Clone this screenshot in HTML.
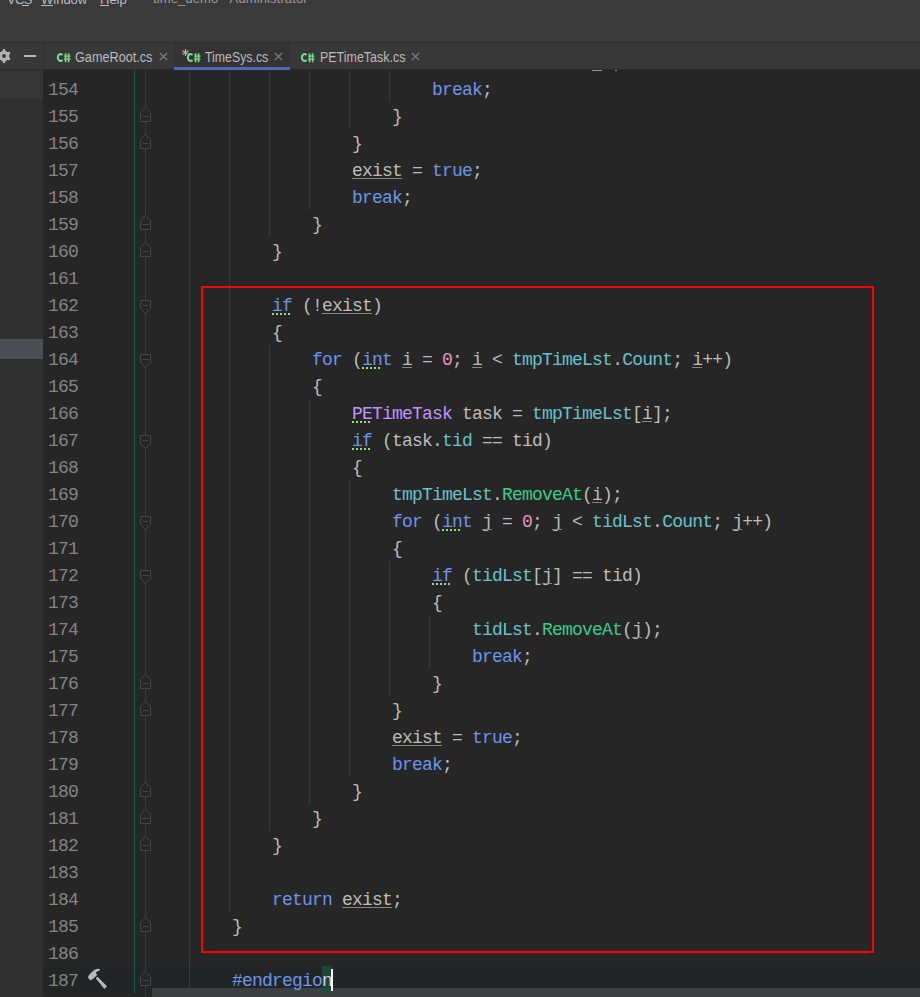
<!DOCTYPE html>
<html><head><meta charset="utf-8"><style>
*{margin:0;padding:0;box-sizing:border-box}
html,body{width:920px;height:997px;overflow:hidden;background:#262626}
body{position:relative;font-family:"Liberation Sans",sans-serif}
.a{position:absolute}
#menu{left:0;top:0;width:920px;height:42px;background:#3a3a3a}
#menu span{position:absolute;top:-8px;font-size:13px;color:#bbbbbb;white-space:nowrap}
#menu span.ti{color:#9d9d9d}
#tabs{left:0;top:42px;width:920px;height:28px;background:#383838;border-top:1px solid #2f2f2f;border-bottom:1px solid #2b2b2b}
#lp{left:0;top:70px;width:43px;height:927px;background:#2f2f2f}
#gut{left:43px;top:70px;width:877px;height:927px;background:#262626}
.tab{position:absolute;top:0;height:26px;font-size:14px;transform:scaleX(0.88);transform-origin:0 0;color:#bbbbbb;white-space:nowrap}
.cs{position:absolute;font-weight:bold;color:#62b543;font-size:12px;letter-spacing:-0.5px}
.x{position:absolute;color:#7f7f7f;font-size:14px}
.ln{position:absolute;left:48px;padding-top:2px;width:30px;height:27px;line-height:27px;text-align:left;font-family:"Liberation Mono",monospace;font-size:18px;letter-spacing:-0.8px;color:#858585;white-space:pre}
.cl{position:absolute;left:192px;padding-top:2px;height:27px;line-height:27px;font-family:"Liberation Mono",monospace;font-size:18px;letter-spacing:-0.8px;color:#bdbdbd;white-space:pre}
.k{color:#6c95eb}.n{color:#ed94c0}.f{color:#66c3cc}.m{color:#39cc8f}.c{color:#c191ff}.t{color:#bdbdbd}.p{color:#6c95eb}.pn{color:#c9d4e8}
.g{position:absolute;width:1px;background:#393939}
.ul{position:absolute;height:1px;background:#858585}
.dt{position:absolute;width:2px;height:2px;background:#8fe07a}
</style></head><body>

<div id="menu" class="a"><span style="left:7px;letter-spacing:-0.6px">VCS</span><div class="a" style="left:22px;top:5px;width:7px;height:1px;background:#bbb"></div><div class="a" style="left:41px;top:5px;width:12px;height:1px;background:#bbb"></div><div class="a" style="left:100px;top:5px;width:9px;height:1px;background:#bbb"></div><span style="left:41px">Window</span><span style="left:100px">Help</span><span class="ti" style="left:153px;top:-9px;letter-spacing:0.12px">time_demo <b style="font-weight:normal;color:transparent">-</b> Administrator</span></div>
<div id="tabs" class="a">
<div class="a" style="left:43px;top:0;width:1px;height:26px;background:#2f2f2f"></div>
<svg class="a" style="left:-4px;top:5px" width="16" height="16" viewBox="-8 -8 16 16"><g fill="#b2b2b6"><circle r="5.3"/><rect x="-1.35" y="-6.9" width="2.7" height="3.5" rx="0.7" transform="rotate(0)"/><rect x="-1.35" y="-6.9" width="2.7" height="3.5" rx="0.7" transform="rotate(60)"/><rect x="-1.35" y="-6.9" width="2.7" height="3.5" rx="0.7" transform="rotate(120)"/><rect x="-1.35" y="-6.9" width="2.7" height="3.5" rx="0.7" transform="rotate(180)"/><rect x="-1.35" y="-6.9" width="2.7" height="3.5" rx="0.7" transform="rotate(240)"/><rect x="-1.35" y="-6.9" width="2.7" height="3.5" rx="0.7" transform="rotate(300)"/></g><circle r="2" fill="#3a3a3a"/></svg>
<div class="a" style="left:24px;top:12px;width:12px;height:2px;background:#b8b8bc"></div>
<div class="a" style="left:174px;top:0;width:116px;height:26px;background:#333333"></div>
<div class="a" style="left:174px;top:24px;width:116px;height:3px;background:#4a6eb0"></div>
<svg class="a" style="left:56px;top:9px" width="16" height="12" viewBox="-1 -1 16 12"><g fill="none" stroke="#2c2c2c" stroke-width="3.2" opacity="0.6"><path d="M5.5 2.11A2.6 3.5 0 1 0 5.5 6.89"/><path d="M8.5 0V9.5M11.5 0V9.5M7 3H13.5M7 6.2H13.5"/></g><g fill="none" stroke="#7bd88a"><path stroke-width="2.1" d="M5.5 2.11A2.6 3.5 0 1 0 5.5 6.89"/><path stroke-width="1.7" d="M8.6 0.2V9.3M11.6 0.2V9.3"/><path stroke-width="1.3" d="M7 3.1H13.5M7 6.1H13.5"/></g></svg>
<span class="tab" style="left:75px;top:6px;transform:scaleX(0.905)">GameRoot.cs</span>
<svg class="a" style="left:159px;top:9px" width="9" height="9" viewBox="0 0 9 9"><path d="M0.8 0.8L8.2 8.2M8.2 0.8L0.8 8.2" stroke="#858585" stroke-width="1.1"/></svg>
<svg class="a" style="left:181px;top:5px" width="9" height="9" viewBox="-4.5 -4.5 9 9"><path d="M0 -3.6V3.6M-3.1 -1.8L3.1 1.8M-3.1 1.8L3.1 -1.8" stroke="#b4b4b4" stroke-width="1.2"/></svg>
<svg class="a" style="left:186px;top:9px" width="16" height="12" viewBox="-1 -1 16 12"><g fill="none" stroke="#2c2c2c" stroke-width="3.2" opacity="0.6"><path d="M5.5 2.11A2.6 3.5 0 1 0 5.5 6.89"/><path d="M8.5 0V9.5M11.5 0V9.5M7 3H13.5M7 6.2H13.5"/></g><g fill="none" stroke="#7bd88a"><path stroke-width="2.1" d="M5.5 2.11A2.6 3.5 0 1 0 5.5 6.89"/><path stroke-width="1.7" d="M8.6 0.2V9.3M11.6 0.2V9.3"/><path stroke-width="1.3" d="M7 3.1H13.5M7 6.1H13.5"/></g></svg>
<span class="tab" style="left:205px;top:6px">TimeSys.cs</span>
<svg class="a" style="left:274px;top:9px" width="9" height="9" viewBox="0 0 9 9"><path d="M0.8 0.8L8.2 8.2M8.2 0.8L0.8 8.2" stroke="#858585" stroke-width="1.1"/></svg>
<svg class="a" style="left:300px;top:9px" width="16" height="12" viewBox="-1 -1 16 12"><g fill="none" stroke="#2c2c2c" stroke-width="3.2" opacity="0.6"><path d="M5.5 2.11A2.6 3.5 0 1 0 5.5 6.89"/><path d="M8.5 0V9.5M11.5 0V9.5M7 3H13.5M7 6.2H13.5"/></g><g fill="none" stroke="#7bd88a"><path stroke-width="2.1" d="M5.5 2.11A2.6 3.5 0 1 0 5.5 6.89"/><path stroke-width="1.7" d="M8.6 0.2V9.3M11.6 0.2V9.3"/><path stroke-width="1.3" d="M7 3.1H13.5M7 6.1H13.5"/></g></svg>
<span class="tab" style="left:320px;top:6px;transform:scaleX(0.89)">PETimeTask.cs</span>
<svg class="a" style="left:411px;top:9px" width="9" height="9" viewBox="0 0 9 9"><path d="M0.8 0.8L8.2 8.2M8.2 0.8L0.8 8.2" stroke="#858585" stroke-width="1.1"/></svg>
</div>
<div id="lp" class="a"></div>
<div class="a" style="left:0;top:70px;width:43px;height:28px;background:#363636"></div>
<div class="a" style="left:0;top:339px;width:43px;height:20px;background:#4b4e53"></div>
<div id="gut" class="a"></div>
<div class="a" style="left:43px;top:966px;width:877px;height:27px;background:#212526"></div>
<div class="a" style="left:134px;top:70px;width:1px;height:923px;background:#1f5c44"></div>
<div class="a" style="left:145px;top:70px;width:1px;height:927px;background:#393939"></div>
<div class="g" style="left:189px;top:70px;height:918px"></div>
<div class="g" style="left:229px;top:70px;height:842px"></div>
<div class="g" style="left:269px;top:70px;height:167px"></div>
<div class="g" style="left:309px;top:70px;height:140px"></div>
<div class="g" style="left:349px;top:70px;height:59px"></div>
<div class="g" style="left:389px;top:70px;height:32px"></div>
<div class="g" style="left:269px;top:345px;height:486px"></div>
<div class="g" style="left:309px;top:399px;height:405px"></div>
<div class="g" style="left:349px;top:480px;height:297px"></div>
<div class="g" style="left:389px;top:561px;height:135px"></div>
<div class="g" style="left:429px;top:615px;height:54px"></div>
<svg class="a" style="left:140px;top:300px" width="11" height="15" viewBox="0 0 11 15"><path d="M0.5 0.5H10.5V8.5L5.5 13.5L0.5 8.5Z" fill="#262626" stroke="#444" stroke-width="1"/><path d="M2.5 5.5H8.5" stroke="#444" stroke-width="1"/></svg>
<svg class="a" style="left:140px;top:354px" width="11" height="15" viewBox="0 0 11 15"><path d="M0.5 0.5H10.5V8.5L5.5 13.5L0.5 8.5Z" fill="#262626" stroke="#444" stroke-width="1"/><path d="M2.5 5.5H8.5" stroke="#444" stroke-width="1"/></svg>
<svg class="a" style="left:140px;top:435px" width="11" height="15" viewBox="0 0 11 15"><path d="M0.5 0.5H10.5V8.5L5.5 13.5L0.5 8.5Z" fill="#262626" stroke="#444" stroke-width="1"/><path d="M2.5 5.5H8.5" stroke="#444" stroke-width="1"/></svg>
<svg class="a" style="left:140px;top:516px" width="11" height="15" viewBox="0 0 11 15"><path d="M0.5 0.5H10.5V8.5L5.5 13.5L0.5 8.5Z" fill="#262626" stroke="#444" stroke-width="1"/><path d="M2.5 5.5H8.5" stroke="#444" stroke-width="1"/></svg>
<svg class="a" style="left:140px;top:570px" width="11" height="15" viewBox="0 0 11 15"><path d="M0.5 0.5H10.5V8.5L5.5 13.5L0.5 8.5Z" fill="#262626" stroke="#444" stroke-width="1"/><path d="M2.5 5.5H8.5" stroke="#444" stroke-width="1"/></svg>
<svg class="a" style="left:140px;top:107px" width="11" height="15" viewBox="0 0 11 15"><path d="M0.5 14.5H10.5V5.5L5.5 0.5L0.5 5.5Z" fill="#262626" stroke="#444" stroke-width="1"/><path d="M2.5 9.5H8.5" stroke="#444" stroke-width="1"/></svg>
<svg class="a" style="left:140px;top:134px" width="11" height="15" viewBox="0 0 11 15"><path d="M0.5 14.5H10.5V5.5L5.5 0.5L0.5 5.5Z" fill="#262626" stroke="#444" stroke-width="1"/><path d="M2.5 9.5H8.5" stroke="#444" stroke-width="1"/></svg>
<svg class="a" style="left:140px;top:215px" width="11" height="15" viewBox="0 0 11 15"><path d="M0.5 14.5H10.5V5.5L5.5 0.5L0.5 5.5Z" fill="#262626" stroke="#444" stroke-width="1"/><path d="M2.5 9.5H8.5" stroke="#444" stroke-width="1"/></svg>
<svg class="a" style="left:140px;top:242px" width="11" height="15" viewBox="0 0 11 15"><path d="M0.5 14.5H10.5V5.5L5.5 0.5L0.5 5.5Z" fill="#262626" stroke="#444" stroke-width="1"/><path d="M2.5 9.5H8.5" stroke="#444" stroke-width="1"/></svg>
<svg class="a" style="left:140px;top:674px" width="11" height="15" viewBox="0 0 11 15"><path d="M0.5 14.5H10.5V5.5L5.5 0.5L0.5 5.5Z" fill="#262626" stroke="#444" stroke-width="1"/><path d="M2.5 9.5H8.5" stroke="#444" stroke-width="1"/></svg>
<svg class="a" style="left:140px;top:701px" width="11" height="15" viewBox="0 0 11 15"><path d="M0.5 14.5H10.5V5.5L5.5 0.5L0.5 5.5Z" fill="#262626" stroke="#444" stroke-width="1"/><path d="M2.5 9.5H8.5" stroke="#444" stroke-width="1"/></svg>
<svg class="a" style="left:140px;top:782px" width="11" height="15" viewBox="0 0 11 15"><path d="M0.5 14.5H10.5V5.5L5.5 0.5L0.5 5.5Z" fill="#262626" stroke="#444" stroke-width="1"/><path d="M2.5 9.5H8.5" stroke="#444" stroke-width="1"/></svg>
<svg class="a" style="left:140px;top:809px" width="11" height="15" viewBox="0 0 11 15"><path d="M0.5 14.5H10.5V5.5L5.5 0.5L0.5 5.5Z" fill="#262626" stroke="#444" stroke-width="1"/><path d="M2.5 9.5H8.5" stroke="#444" stroke-width="1"/></svg>
<svg class="a" style="left:140px;top:836px" width="11" height="15" viewBox="0 0 11 15"><path d="M0.5 14.5H10.5V5.5L5.5 0.5L0.5 5.5Z" fill="#262626" stroke="#444" stroke-width="1"/><path d="M2.5 9.5H8.5" stroke="#444" stroke-width="1"/></svg>
<svg class="a" style="left:140px;top:917px" width="11" height="15" viewBox="0 0 11 15"><path d="M0.5 14.5H10.5V5.5L5.5 0.5L0.5 5.5Z" fill="#262626" stroke="#444" stroke-width="1"/><path d="M2.5 9.5H8.5" stroke="#444" stroke-width="1"/></svg>
<svg class="a" style="left:140px;top:971px" width="11" height="15" viewBox="0 0 11 15"><path d="M0.5 14.5H10.5V5.5L5.5 0.5L0.5 5.5Z" fill="#262626" stroke="#444" stroke-width="1"/><path d="M2.5 9.5H8.5" stroke="#444" stroke-width="1"/></svg>
<div class="ln" style="top:75px">154</div>
<div class="ln" style="top:102px">155</div>
<div class="ln" style="top:129px">156</div>
<div class="ln" style="top:156px">157</div>
<div class="ln" style="top:183px">158</div>
<div class="ln" style="top:210px">159</div>
<div class="ln" style="top:237px">160</div>
<div class="ln" style="top:264px">161</div>
<div class="ln" style="top:291px">162</div>
<div class="ln" style="top:318px">163</div>
<div class="ln" style="top:345px">164</div>
<div class="ln" style="top:372px">165</div>
<div class="ln" style="top:399px">166</div>
<div class="ln" style="top:426px">167</div>
<div class="ln" style="top:453px">168</div>
<div class="ln" style="top:480px">169</div>
<div class="ln" style="top:507px">170</div>
<div class="ln" style="top:534px">171</div>
<div class="ln" style="top:561px">172</div>
<div class="ln" style="top:588px">173</div>
<div class="ln" style="top:615px">174</div>
<div class="ln" style="top:642px">175</div>
<div class="ln" style="top:669px">176</div>
<div class="ln" style="top:696px">177</div>
<div class="ln" style="top:723px">178</div>
<div class="ln" style="top:750px">179</div>
<div class="ln" style="top:777px">180</div>
<div class="ln" style="top:804px">181</div>
<div class="ln" style="top:831px">182</div>
<div class="ln" style="top:858px">183</div>
<div class="ln" style="top:885px">184</div>
<div class="ln" style="top:912px">185</div>
<div class="ln" style="top:939px">186</div>
<div class="ln" style="top:966px">187</div>
<svg class="a" style="left:82px;top:964px" width="30" height="30" viewBox="0 0 30 30"><g fill="#b9b9bd"><path d="M5.8 13.6L7.2 10.8L10.5 7.4L13 5.4L15.5 4.8L17.9 4.9L17.7 6.4L15.6 7.2L13.8 8.4L15.1 11.1L11.2 14.8L8.4 16.4Z"/><path d="M13.7 14.3L15.5 12.8L25 22.3L22.4 25Z"/></g></svg>
<div class="a" style="left:152px;top:988px;width:768px;height:9px;background:#3e3f42"></div>
<div class="a" style="left:322px;top:966px;width:10px;height:27px;background:rgba(30,80,55,0.75)"></div>
<div class="cl" style="left:432px;top:75px"><span class="k">break</span><span class="t">;</span></div>
<div class="cl" style="left:392px;top:102px"><span class="t">}</span></div>
<div class="cl" style="left:352px;top:129px"><span class="t">}</span></div>
<div class="cl" style="left:352px;top:156px"><span class="t">exist</span><span class="t"> = </span><span class="k">true</span><span class="t">;</span></div>
<div class="cl" style="left:352px;top:183px"><span class="k">break</span><span class="t">;</span></div>
<div class="cl" style="left:312px;top:210px"><span class="t">}</span></div>
<div class="cl" style="left:272px;top:237px"><span class="t">}</span></div>
<div class="cl" style="left:272px;top:291px"><span class="k">if</span><span class="t"> (!</span><span class="t">exist</span><span class="t">)</span></div>
<div class="cl" style="left:272px;top:318px"><span class="t">{</span></div>
<div class="cl" style="left:312px;top:345px"><span class="k">for</span><span class="t"> (</span><span class="k">int</span><span class="t"> i = </span><span class="n">0</span><span class="t">; i &lt; </span><span class="f">tmpTimeLst</span><span class="t">.</span><span class="f">Count</span><span class="t">; i++)</span></div>
<div class="cl" style="left:312px;top:372px"><span class="t">{</span></div>
<div class="cl" style="left:352px;top:399px"><span class="c">PETimeTask</span><span class="t"> task = </span><span class="f">tmpTimeLst</span><span class="t">[i];</span></div>
<div class="cl" style="left:352px;top:426px"><span class="k">if</span><span class="t"> (task.</span><span class="f">tid</span><span class="t"> == tid)</span></div>
<div class="cl" style="left:352px;top:453px"><span class="t">{</span></div>
<div class="cl" style="left:392px;top:480px"><span class="f">tmpTimeLst</span><span class="t">.</span><span class="m">RemoveAt</span><span class="t">(i);</span></div>
<div class="cl" style="left:392px;top:507px"><span class="k">for</span><span class="t"> (</span><span class="k">int</span><span class="t"> j = </span><span class="n">0</span><span class="t">; j &lt; </span><span class="f">tidLst</span><span class="t">.</span><span class="f">Count</span><span class="t">; j++)</span></div>
<div class="cl" style="left:392px;top:534px"><span class="t">{</span></div>
<div class="cl" style="left:432px;top:561px"><span class="k">if</span><span class="t"> (</span><span class="f">tidLst</span><span class="t">[j] == tid)</span></div>
<div class="cl" style="left:432px;top:588px"><span class="t">{</span></div>
<div class="cl" style="left:472px;top:615px"><span class="f">tidLst</span><span class="t">.</span><span class="m">RemoveAt</span><span class="t">(j);</span></div>
<div class="cl" style="left:472px;top:642px"><span class="k">break</span><span class="t">;</span></div>
<div class="cl" style="left:432px;top:669px"><span class="t">}</span></div>
<div class="cl" style="left:392px;top:696px"><span class="t">}</span></div>
<div class="cl" style="left:392px;top:723px"><span class="t">exist</span><span class="t"> = </span><span class="k">true</span><span class="t">;</span></div>
<div class="cl" style="left:392px;top:750px"><span class="k">break</span><span class="t">;</span></div>
<div class="cl" style="left:352px;top:777px"><span class="t">}</span></div>
<div class="cl" style="left:312px;top:804px"><span class="t">}</span></div>
<div class="cl" style="left:272px;top:831px"><span class="t">}</span></div>
<div class="cl" style="left:272px;top:885px"><span class="k">return</span><span class="t"> </span><span class="t">exist</span><span class="t">;</span></div>
<div class="cl" style="left:232px;top:912px"><span class="t">}</span></div>
<div class="cl" style="left:232px;top:966px"><span class="p">#endregio</span><span class="pn">n</span></div>
<div class="ul" style="left:352px;top:178px;width:50px"></div>
<div class="ul" style="left:322px;top:313px;width:50px"></div>
<div class="ul" style="left:402px;top:367px;width:10px"></div>
<div class="ul" style="left:472px;top:367px;width:10px"></div>
<div class="ul" style="left:692px;top:367px;width:10px"></div>
<div class="ul" style="left:642px;top:421px;width:10px"></div>
<div class="ul" style="left:592px;top:502px;width:10px"></div>
<div class="ul" style="left:482px;top:529px;width:10px"></div>
<div class="ul" style="left:552px;top:529px;width:10px"></div>
<div class="ul" style="left:732px;top:529px;width:10px"></div>
<div class="ul" style="left:542px;top:583px;width:10px"></div>
<div class="ul" style="left:632px;top:637px;width:10px"></div>
<div class="ul" style="left:392px;top:745px;width:50px"></div>
<div class="ul" style="left:342px;top:907px;width:50px"></div>
<div class="dt" style="left:272px;top:313px"></div>
<div class="dt" style="left:276px;top:313px"></div>
<div class="dt" style="left:280px;top:313px"></div>
<div class="dt" style="left:284px;top:313px"></div>
<div class="dt" style="left:288px;top:313px"></div>
<div class="dt" style="left:362px;top:367px"></div>
<div class="dt" style="left:366px;top:367px"></div>
<div class="dt" style="left:370px;top:367px"></div>
<div class="dt" style="left:374px;top:367px"></div>
<div class="dt" style="left:378px;top:367px"></div>
<div class="dt" style="left:352px;top:421px"></div>
<div class="dt" style="left:356px;top:421px"></div>
<div class="dt" style="left:360px;top:421px"></div>
<div class="dt" style="left:364px;top:421px"></div>
<div class="dt" style="left:368px;top:421px"></div>
<div class="dt" style="left:352px;top:448px"></div>
<div class="dt" style="left:356px;top:448px"></div>
<div class="dt" style="left:360px;top:448px"></div>
<div class="dt" style="left:364px;top:448px"></div>
<div class="dt" style="left:368px;top:448px"></div>
<div class="dt" style="left:442px;top:529px"></div>
<div class="dt" style="left:446px;top:529px"></div>
<div class="dt" style="left:450px;top:529px"></div>
<div class="dt" style="left:454px;top:529px"></div>
<div class="dt" style="left:458px;top:529px"></div>
<div class="dt" style="left:432px;top:583px"></div>
<div class="dt" style="left:436px;top:583px"></div>
<div class="dt" style="left:440px;top:583px"></div>
<div class="dt" style="left:444px;top:583px"></div>
<div class="dt" style="left:448px;top:583px"></div>
<div class="a" style="left:592px;top:70px;width:10px;height:1px;background:#9a9a9a"></div>
<div class="a" style="left:615px;top:70px;width:2px;height:1px;background:#8a8a8a"></div>
<div class="a" style="left:201px;top:286px;width:673px;height:667px;border:2px solid #ff0000"></div>
<div class="a" style="left:331px;top:969px;width:2px;height:22px;background:#ffffff"></div>
</body></html>
